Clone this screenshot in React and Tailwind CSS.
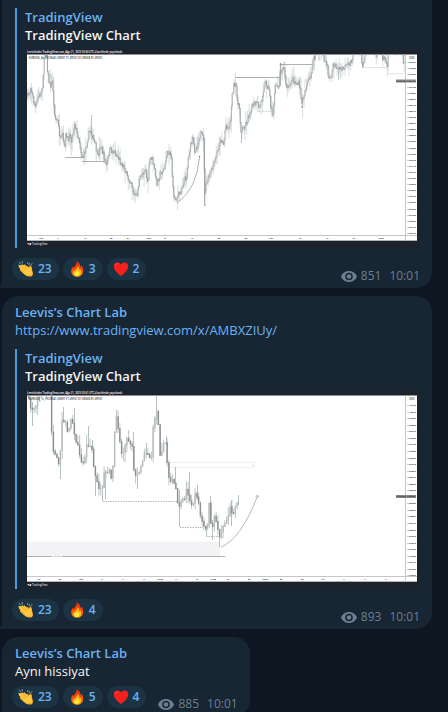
import { useId } from "react";

const DAY_PATH = [
  [27, 97], [30, 93], [31, 86], [33, 97], [36, 108], [38, 98], [41, 94], [43, 85], [44, 70], [45, 54],
  [47, 54], [48, 72], [50, 85], [52, 85], [53, 79], [54, 105], [56, 120], [58, 120], [60, 135], [61, 142],
  [63, 135], [65, 150], [66, 135], [68, 140], [70, 134], [72, 140], [75, 123], [77, 132], [79, 137], [82, 155],
  [84, 157], [87, 145], [88, 138], [91, 130], [93, 137], [96, 146], [98, 157], [101, 145], [103, 152], [107, 166],
  [110, 150], [115, 152], [120, 160], [125, 168], [128, 178], [132, 182], [134, 195], [137, 196], [140, 180], [143, 173],
  [146, 168], [148, 186], [150, 160], [152, 157], [155, 170], [157, 184], [160, 175], [165, 168], [167, 155], [170, 151],
  [172, 158], [173, 187], [175, 199], [178, 197], [181, 192], [184, 182], [187, 176], [189, 155], [191, 146], [193, 138],
  [195, 150], [198, 145], [199, 138], [201, 134], [204, 138], [205, 193], [207, 183], [210, 175], [213, 168], [215, 162],
  [217, 155], [220, 143], [222, 139], [224, 145], [226, 125], [229, 128], [231, 120], [232, 100], [234, 86], [237, 87],
  [238, 105], [240, 108], [241, 130], [244, 128], [248, 120], [251, 110], [254, 104], [258, 104], [260, 108], [262, 100],
  [264, 88], [266, 82], [268, 86], [270, 92], [271, 105], [273, 118], [275, 95], [276, 86], [279, 85], [280, 73],
  [283, 67], [285, 70], [286, 86], [290, 88], [292, 78], [296, 83], [299, 84], [301, 92], [302, 104], [305, 92],
  [308, 82], [311, 78], [313, 62], [315, 58], [317, 50], [323, 50], [325, 62], [328, 64], [329, 81], [332, 74],
  [334, 64], [338, 68], [341, 70], [346, 67], [350, 64], [353, 57], [354, 45], [361, 45], [362, 63], [364, 65],
  [366, 45], [375, 45], [377, 57], [378, 45], [382, 47], [383, 57], [386, 60], [388, 70], [389, 45], [402, 45],
  [404, 64], [405, 58],
];

const HOUR_PATH = [
  [28, 393], [30, 402], [32, 410], [35, 407], [38, 402], [40, 393], [51, 394], [53, 445], [55, 455], [58, 456],
  [60, 467], [62, 440], [63, 418], [66, 423], [69, 433], [71, 420], [73, 416], [75, 435], [78, 444], [81, 455],
  [83, 468], [86, 455], [88, 443], [91, 446], [93, 450], [95, 472], [98, 483], [101, 490], [103, 492], [105, 475],
  [108, 473], [111, 472], [113, 480], [115, 447], [116, 418], [118, 420], [120, 433], [123, 458], [126, 443], [128, 438],
  [131, 442], [134, 447], [135, 475], [137, 478], [140, 470], [143, 462], [145, 452], [148, 452], [151, 458], [153, 455],
  [154, 430], [156, 414], [158, 411], [160, 430], [161, 453], [164, 447], [166, 440], [168, 462], [169, 475], [172, 480],
  [175, 484], [177, 490], [178, 505], [181, 505], [183, 502], [185, 500], [187, 490], [190, 495], [192, 508], [195, 500],
  [197, 492], [199, 500], [201, 515], [204, 526], [207, 531], [209, 520], [210, 505], [211, 524], [213, 528], [215, 516],
  [217, 520], [219, 530], [220, 541], [222, 531], [225, 524], [228, 520], [231, 508], [234, 513], [237, 504], [239, 498],
];

const HOUR_WICKS = [
  [32, 402, 426], [60, 460, 479], [63, 407, 420], [74, 408, 425], [88, 426, 445], [95, 470, 496], [102, 485, 501],
  [105, 470, 499], [92, 440, 450], [116, 410, 420], [133, 432, 445], [137, 475, 489], [156, 395, 420], [146, 443, 455],
  [166, 436, 446], [175, 467, 484], [179, 490, 527], [189, 472, 500], [197, 485, 500], [210, 496, 520], [206, 525, 536],
  [212, 520, 540], [219, 530, 547], [231, 500, 526], [238, 495, 505],
];

const PRICES_DAY = Array.from({ length: 29 }, (_, i) => ({
  y: 62.5 + i * 6.1,
  label: (1.0965 - i * 0.0013).toFixed(5),
}));
const PRICES_HOUR = Array.from({ length: 27 }, (_, i) => ({
  y: 405.5 + i * 6.55,
  label: (1.1015 - i * 0.0011).toFixed(5),
}));

const DATES_DAY = [
  [41, "Nis"], [58, "6"], [85, "17"], [111, "20"], [128, "24"], [149, "May"], [165, "8"], [192, "15"], [219, "22"],
  [246, "27"], [271, "Haz"], [300, "12"], [327, "17"], [354, "24"], [381, "Tem"],
];
const DATES_HOUR = [
  [39, "24"], [60, "28"], [81, "Ağu"], [102, "3"], [123, "7"], [144, "9"], [160, "12:00"], [176, "14"], [197, "16"],
  [213, "15:00"], [228, "21"], [249, "23"], [265, "12:00"], [281, "28"], [302, "30"], [323, "Eyl"], [344, "5"],
  [365, "7"], [386, "11"],
];

// walk the price path and cut it into candles of equal width
function toCandles(points, step, wick, jitter) {
  const priceAt = (x) => {
    const i = Math.max(1, points.findIndex((p) => p[0] >= x));
    const [x0, y0] = points[i - 1];
    const [x1, y1] = points[i];
    return y0 + ((y1 - y0) * (x - x0)) / (x1 - x0);
  };
  const candles = [];
  const last = points[points.length - 1][0];
  let seed = 7;
  const rand = () => {
    seed = (seed * 16807) % 2147483647;
    return seed / 2147483647;
  };
  let open = priceAt(points[0][0]);
  for (let x = points[0][0]; x + step <= last; x += step) {
    const close = priceAt(x + step) + (rand() - 0.5) * jitter;
    const top = Math.min(open, close) - 0.4;
    const bottom = Math.max(open, close) + 0.4;
    candles.push({
      x: x + step / 2,
      top,
      bottom,
      high: top - rand() * rand() * wick,
      low: bottom + rand() * rand() * wick,
      down: close > open,
    });
    open = close;
  }
  return candles;
}

function Candles({ points, step, width, wick, jitter, up, down }) {
  return toCandles(points, step, wick, jitter).map((c, i) => (
    <g key={i}>
      <line x1={c.x} x2={c.x} y1={c.high} y2={c.low} stroke="#b3bebe" strokeWidth={width * 0.6} />
      <line x1={c.x} x2={c.x} y1={c.top} y2={c.bottom} stroke={c.down ? down : up} strokeWidth={width} />
    </g>
  ));
}

function ChartFrame({ top, title, symbol, prices, dates, priceTag, currentPrice, children }) {
  const clip = useId();
  return (
    <svg viewBox={`25 ${top} 394 198`} className="mt-1.5 block w-full" fontFamily="Open Sans, sans-serif" role="img" aria-label="TradingView Chart">
      <rect x="25" y={top} width="394" height="198" rx="3" fill="#1e222d" />
      <text x="27" y={top + 3.2} fontSize="2.6" fontWeight="600" fill="#fff">{title}</text>
      <clipPath id={clip}>
        <rect x="27" y={top + 4.5} width="390" height="186" />
      </clipPath>
      <g clipPath={`url(#${clip})`}>
        <rect x="27" y={top + 4} width="390" height="187" fill="#fff" />
        {children}
        <path d={`M27 ${top + 185.5}H417M405.5 ${top + 4}V${top + 191}`} stroke="#b9b9bd" strokeWidth=".8" />
        <path d={`M27 ${top + 190.5}H417`} stroke="#d5d5d9" />
        <text x="29" y={top + 8.8} fontSize="2.7" fontWeight="600" fill="#333">{symbol}</text>
        <text x="409" y={top + 8.8} fontSize="2.7" fontWeight="600" fill="#444">USD</text>
        {prices.map((p) => (
          <text key={p.y} x="407" y={p.y + 0.6} fontSize="2.4" fontWeight="600" fill="#222">{p.label}</text>
        ))}
        {dates.map(([x, label]) => (
          <text key={x} x={x} y={top + 188.8} fontSize="2.4" fontWeight="600" fill="#222" textAnchor="middle">{label}</text>
        ))}
        <rect x="396" y={priceTag} width="20" height="3" fill="#858585" />
        <text x="397" y={priceTag + 2.3} fontSize="2.2" fill="#111">EURUSD</text>
        <text x="407" y={priceTag + 2.3} fontSize="2.2" fill="#111">{currentPrice}</text>
      </g>
      <path d={`M27.500 ${top + 193.2}h2v1.800h-.9v-1h-1.100zM30 ${top + 193.2}h1.500l-.7 1.800h-.8z`} fill="#fff" />
      <text x="32" y={top + 195.2} fontSize="2.6" fontWeight="600" fill="#d1d4dc">TradingView</text>
    </svg>
  );
}

function DailyChart() {
  return (
    <ChartFrame
      top={50}
      title="LeevisIndex TradingView.com, Ağu 21, 2023 03:00 UTC-4 tarihinde yayınlandı"
      symbol="EURUSD, 4s, FXCM  A1.09091  Y1.09107  D1.09038  K1.09101"
      prices={PRICES_DAY}
      dates={DATES_DAY}
      priceTag={79.5}
      currentPrice="1.09175"
    >
      <Candles points={DAY_PATH} step={0.8} width={0.8} wick={14} jitter={6} up="#a3a7a8" down="#8b8d8f" />
      <g fill="none" stroke="#9b9d9f" strokeWidth=".8">
        <path d="M65 157.500H83M82 161.500H105M235 77.500H279M280.500 64.500H312.500M280.500 63V86" />
        <path d="M177 203Q197 189 199.500 157M204.500 138V205" />
        <path d="M257 111.500H271M362 67.500H388M388 73.500H405" stroke="#d0d2d3" strokeWidth=".6" />
        <path d="M91.500 115V130M302.500 98V107M241.500 130V143M338.500 68V80" stroke="#a9b5b5" />
      </g>
      <g fill="#808385">
        <circle cx="199.500" cy="156.500" r=".8" />
        <circle cx="205" cy="205" r=".8" />
        <circle cx="302" cy="107" r=".8" />
        <circle cx="280.500" cy="64" r=".8" />
      </g>
    </ChartFrame>
  );
}

function HourlyChart() {
  return (
    <ChartFrame
      top={391}
      title="LeevisIndex TradingView.com, Ağu 21, 2023 03:01 UTC-4 tarihinde yayınlandı"
      symbol="EURUSD, 1s, FXCM  A1.09091  Y1.09107  D1.09038  K1.09101"
      prices={PRICES_HOUR}
      dates={DATES_HOUR}
      priceTag={495}
      currentPrice="1.08906"
    >
      <rect x="27" y="541.500" width="193" height="15" fill="#f3f3f5" />
      <path d="M27 556.500H52M62 556.500H225" stroke="#b0b0b3" />
      <text x="53" y="557.400" fontSize="2.4" fill="#999">Haftalık</text>
      <rect x="168.500" y="462.500" width="86" height="5" fill="none" stroke="#e6e6e6" strokeWidth=".6" />
      <text x="252" y="465.800" fontSize="2.200" fill="#777">FV</text>
      {HOUR_WICKS.map(([x, y1, y2]) => (
        <line key={x} x1={x + 0.5} x2={x + 0.5} y1={y1} y2={y2} stroke="#adb9b9" strokeWidth=".9" />
      ))}
      <Candles points={HOUR_PATH} step={1.75} width={1.4} wick={10} jitter={5} up="#b9bcbd" down="#8a8c8e" />
      <g fill="none" stroke="#a3a5a7" strokeWidth=".8">
        <path d="M103 501.500H178M180 527.500H203M206 536.500H219" strokeDasharray="1.500 1" />
        <path d="M221 547Q241 539 257.500 496" />
        <path d="M255.500 496.500l2.300-1.300.4 2.600" />
      </g>
    </ChartFrame>
  );
}

function Clap() {
  return (
    <svg viewBox="0 0 16 16" className="size-4 shrink-0" aria-hidden="true">
      <path d="M1.200 1.200l1.300 1.500M4 .3l.4 1.800M.5 4.300l1.300.3M11.500 2.200l-.5 1.700M14 2.600l-1.300 1.700M9.600 1.400l.2 1.300" stroke="#8fa0ac" strokeWidth=".9" strokeLinecap="round" />
      <path d="M8 5.200c.8-1 1.800-.5 2.400.2l.8.9c.1-1 .9-1.900 1.900-1.300.7.500.8 1.600.9 3 .2 2 1.200 3.500.9 5.400-.3 1.500-1.500 2.300-3 2.100z" fill="#e79a2b" />
      <path d="M1.200 4.500c.6-.7 1.300-.5 1.900.1-.2-.9.900-1.600 1.700-.9l.5.500c.2-.8 1.300-1 1.900-.3l4 4.200c0-1.200.2-2.500 1.200-2.500 1.100.1 1 1.700 1.100 2.800.2 1.700 1.200 2.700.9 4.500-.3 1.700-1.800 2.600-3.700 2.400-1.900-.2-3.400-1.200-4.800-2.400l-3.500-3.100c-.7-.7-.5-1.500.1-1.800l-1.100-1.100c-.7-.7-.7-1.700-.2-2.400z" fill="#ffc83d" />
      <path d="M3.100 4.700l4.600 4.600M5.300 4.300l4 4.200M2.500 8l3.500 3.300" stroke="#e8992c" strokeWidth=".7" strokeLinecap="round" fill="none" />
      <path d="M7.200 13.800c2.200 1.500 4.900 1.500 6.300-.5" stroke="#f0a22e" strokeWidth=".8" fill="none" />
    </svg>
  );
}

function Fire() {
  const id = useId();
  return (
    <svg viewBox="0 0 16 16" className="size-4 shrink-0" aria-hidden="true">
      <linearGradient id={id} x1="0" y1="0" x2="0" y2="1">
        <stop offset="0" stopColor="#e8290b" />
        <stop offset=".6" stopColor="#f9520d" />
        <stop offset="1" stopColor="#ff8a12" />
      </linearGradient>
      <path d="M7.300.3c2.800 1 4.300 3.200 4.200 5.900.5-.4.700-1 .7-1.700 1.400 1.400 2.300 3.500 2 5.900-.4 3.200-2.900 5.300-6 5.300-3.300 0-5.900-2.200-6-5.500-.1-2 .8-3.500 1.700-4.500.1.900.4 1.500.9 1.800C5 5 8.500 3.600 7.300.3z" fill={`url(#${id})`} />
      <path d="M8.600 5c1.800 1.500 2 3 1.800 4.300.5-.2.800-.6.900-1.100 1 1.400 1.400 3.200.5 4.900-.7 1.400-2 2.200-3.600 2.200-2.400 0-4.100-1.500-4.100-3.700 0-1.100.4-1.900.8-2.400.2.600.5 1 .9 1.100C5.900 8.200 8.800 7.300 8.600 5z" fill="#ffb01f" />
      <path d="M8.300 8.900c1.200 1.200.9 1.900 1 2.600.4-.1.700-.4.900-.7.700 2-.1 4.200-2.200 4.200-1.700 0-2.900-1-2.900-2.500 0-.7.200-1.100.5-1.500.2.400.5.500.8.600.2-1 1.700-1.400 1.900-2.700z" fill="#ffee35" />
    </svg>
  );
}

function Heart() {
  return (
    <svg viewBox="0 0 16 16" className="size-4 shrink-0" aria-hidden="true">
      <path d="M8 15C5.500 12.700.8 9.700.8 5.400.8 3.100 2.400 1.500 4.500 1.500c1.500 0 2.800.8 3.500 2.100.7-1.300 2-2.100 3.500-2.100 2.100 0 3.700 1.600 3.700 3.900C15.200 9.700 10.500 12.700 8 15z" fill="#f8201c" />
      <path d="M2 4.500c.3-1.100 1.200-1.800 2.400-1.800" stroke="#ff5a4d" strokeWidth=".8" strokeLinecap="round" fill="none" />
    </svg>
  );
}

function Eye() {
  return (
    <svg viewBox="0 0 16 11" className="h-[11px] w-4 shrink-0" aria-hidden="true">
      <path fillRule="evenodd" d="M8 0c3.600 0 6.700 2.200 8 5.500C14.700 8.800 11.600 11 8 11S1.300 8.800 0 5.500C1.300 2.200 4.400 0 8 0zm0 1.700a3.800 3.800 0 1 0 0 7.600 3.800 3.800 0 0 0 0-7.600zm0 1.500a2.300 2.300 0 1 1 0 4.600 2.300 2.300 0 0 1 0-4.600z" fill="#6d7f8f" />
    </svg>
  );
}

const EMOJI = { clap: Clap, fire: Fire, heart: Heart };

function Reaction({ type, count }) {
  const Icon = EMOJI[type];
  return (
    <button
      type="button"
      aria-label={`${type} ${count}`}
      className="flex h-[22px] items-center gap-1 rounded-full bg-[#1c3344] pr-[7px] pl-1.5 text-xs font-semibold text-[#6ab3f3]"
    >
      <Icon />
      {count}
    </button>
  );
}

function Preview({ children }) {
  return (
    <div className="border-l-2 border-[#4a9ade] pl-2">
      <a href="https://www.tradingview.com" className="block font-semibold text-[#6ab3f3]">TradingView</a>
      <p className="font-semibold text-[#f5f5f5]">TradingView Chart</p>
      {children}
    </div>
  );
}

function Message({ className, reactions, views, footer, children }) {
  return (
    <article className={`relative rounded-2xl rounded-bl-none bg-[#182533] pb-2 ${className}`}>
      <div className="px-[13px]">{children}</div>
      <footer className={`flex items-end justify-between gap-3 pr-3 pl-2.5 ${footer}`}>
        <div className="flex gap-1">
          {reactions.map(([type, count]) => (
            <Reaction key={type} type={type} count={count} />
          ))}
        </div>
        <div className="-mb-1 flex items-center gap-1 text-xs text-[#6d7f8f]">
          <Eye />
          <span>{views}</span>
          <time className="ml-1">10:01</time>
        </div>
      </footer>
      <svg viewBox="0 0 2 6" className="absolute bottom-0 -left-0.5 h-1.5 w-0.5" aria-hidden="true">
        <path d="M2 0Q1.500 2.500 0 4V6H2z" fill="#182533" />
      </svg>
    </article>
  );
}

function Author() {
  return <h2 className="font-semibold text-[#6ab3f3]">Leevis’s Chart Lab</h2>;
}

export default function App() {
  return (
    <main className="flex h-screen flex-col gap-2 overflow-hidden bg-[#0e1621] pr-4 pl-0.5 font-['Open_Sans',sans-serif] text-[13px] leading-[18px]">
      <Message
        className="rounded-t-none pt-2"
        footer="mt-2.5"
        views={851}
        reactions={[["clap", 23], ["fire", 3], ["heart", 2]]}
      >
        <Preview>
          <DailyChart />
        </Preview>
      </Message>
      <Message
        className="pt-[7px]"
        footer="mt-2.5"
        views={893}
        reactions={[["clap", 23], ["fire", 4]]}
      >
        <Author />
        <a href="https://www.tradingview.com/x/AMBXZIUy/" className="mb-2.5 block text-[#6ab3f3]">
          https://www.tradingview.com/x/AMBXZIUy/
        </a>
        <Preview>
          <HourlyChart />
        </Preview>
      </Message>
      <Message
        className="w-fit shrink-0 pt-[7px]"
        footer="mt-1.5"
        views={885}
        reactions={[["clap", 23], ["fire", 5], ["heart", 4]]}
      >
        <Author />
        <p className="text-[#f5f5f5]">Aynı hissiyat</p>
      </Message>
    </main>
  );
}
